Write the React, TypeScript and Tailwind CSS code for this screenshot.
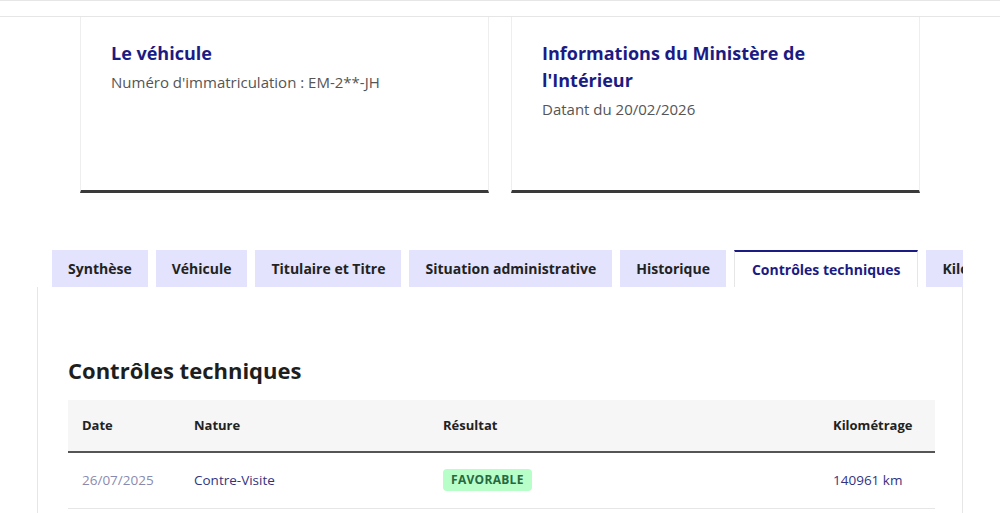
import React from 'react'

// Fiche véhicule — onglet « Contrôles techniques » actif.

const font = { fontFamily: '"Open Sans", "Noto Sans", Arial, sans-serif' }

const tabs = [
    'Synthèse',
    'Véhicule',
    'Titulaire et Titre',
    'Situation administrative',
    'Historique',
    'Contrôles techniques',
    'Kilométrage',
]

const ACTIVE = 'Contrôles techniques'

function InfoCard({ title, sub, titleClass = '' }: { title: string; sub: string; titleClass?: string }) {
    return (
        <div className="h-[176px] w-[409px] border-x border-[#eeeeee] border-b-[3px] border-b-[#3a3a3a] px-[30px] pt-[23px]">
            <h3 className={`text-[18px] font-bold leading-[27px] text-[#1b1b84] ${titleClass}`}>{title}</h3>
            <p className="mt-[5px] text-[15px] leading-[20px] text-[#555555]">{sub}</p>
        </div>
    )
}

export default function App() {
    return (
        <div style={font} className="relative h-[513px] w-[1000px] overflow-hidden bg-white">
            <div className="h-[17px] border-y border-[#e6e6e6]" />

            <div className="flex gap-[22px] pl-[80px]">
                <InfoCard title="Le véhicule" sub="Numéro d'immatriculation : EM-2**-JH" />
                <InfoCard
                    title="Informations du Ministère de l'Intérieur"
                    sub="Datant du 20/02/2026"
                    titleClass="max-w-[300px]"
                />
            </div>

            <div className="ml-[37px] mt-[57px] w-[926px]">
                <div className="flex gap-2 overflow-hidden pl-[15px]">
                    {tabs.map(t => {
                        const active = t === ACTIVE
                        return (
                            <div
                                key={t}
                                className={`flex h-[37px] shrink-0 items-center whitespace-nowrap text-[14px] font-bold ${
                                    active
                                        ? 'border-x border-t-2 border-x-[#e6e6e6] border-t-[#1b1b84] bg-white px-[17px] text-[#1b1b84]'
                                        : 'bg-[#e3e3fd] px-4 text-[#222222]'
                                }`}
                            >
                                {t}
                            </div>
                        )
                    })}
                </div>

                <div className="h-[240px] border-x border-[#e6e6e6] px-[30px] pt-[67px]">
                    <h2 className="text-[22px] font-bold leading-[32px] text-[#1e1e1e]">Contrôles techniques</h2>

                    <table className="mt-[14px] w-[867px] border-collapse text-left">
                        <thead>
                            <tr className="h-[52px] border-b-2 border-[#555555] bg-[#f6f6f6] text-[13px] font-bold text-[#222222]">
                                <th className="w-[112px] pl-[14px] font-bold">Date</th>
                                <th className="w-[249px] pl-[14px] font-bold">Nature</th>
                                <th className="w-[390px] pl-[14px] font-bold">Résultat</th>
                                <th className="pl-[14px] font-bold">Kilométrage</th>
                            </tr>
                        </thead>
                        <tbody>
                            <tr className="h-[56px] border-b border-[#e6e6e6] text-[13.5px] text-[#33337f]">
                                <td className="pl-[14px] text-[#8a8ab0]">26/07/2025</td>
                                <td className="pl-[14px]">Contre-Visite</td>
                                <td className="pl-[14px]">
                                    <span className="inline-block rounded-[4px] bg-[#b8fec9] px-2 text-[12px] font-bold leading-[22px] tracking-wide text-[#27693f]">
                                        FAVORABLE
                                    </span>
                                </td>
                                <td className="pl-[14px]">140961 km</td>
                            </tr>
                        </tbody>
                    </table>
                </div>
            </div>
        </div>
    )
}
